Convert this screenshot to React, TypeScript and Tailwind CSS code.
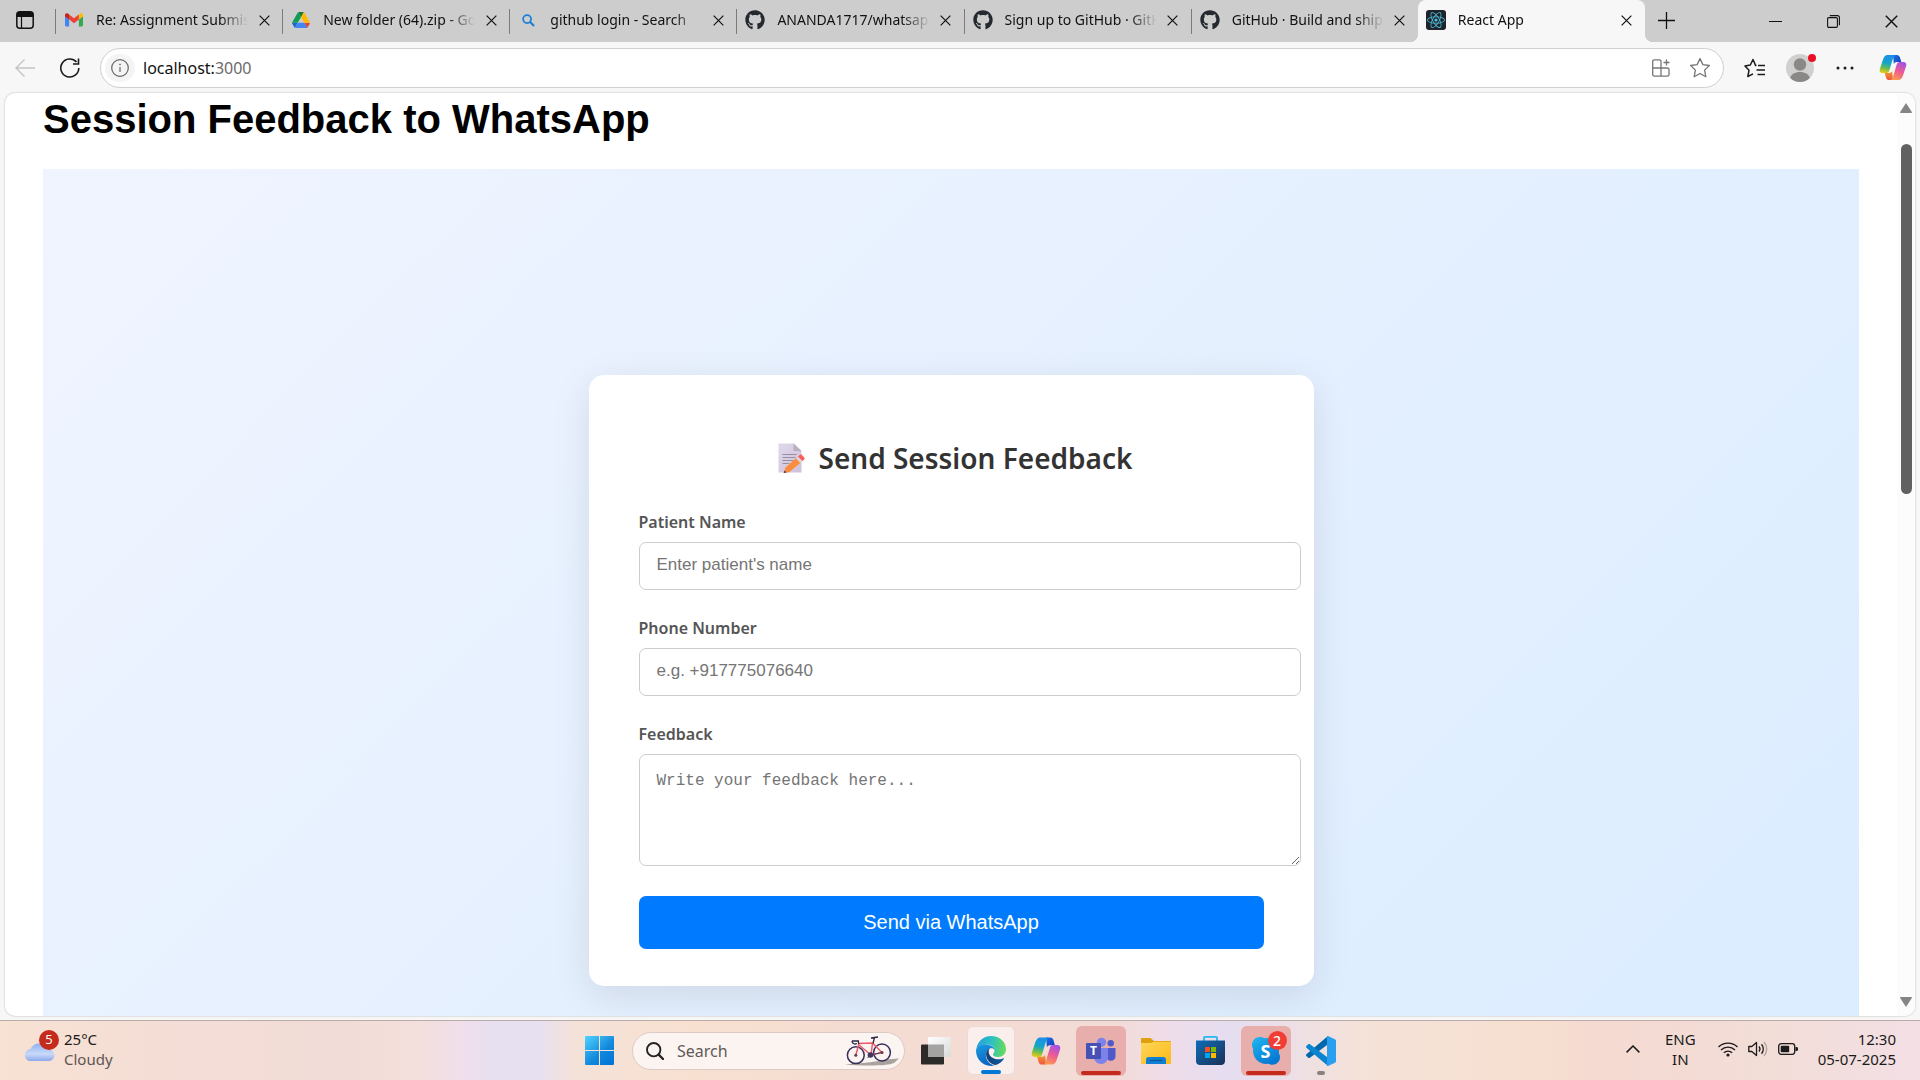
import React from "react";
import { FaGithub, FaReact } from "react-icons/fa";

type IconProps = { className?: string };

const Gmail = ({ className }: IconProps) => (
  <svg viewBox="0 0 24 18" className={className} aria-hidden="true">
    <path d="M0 3.500v12.600c0 .9.7 1.600 1.600 1.600h3.900V8.200z" fill="#4285f4" />
    <path d="M24 3.500v12.600c0 .9-.7 1.600-1.600 1.600h-3.900V8.200z" fill="#34a853" />
    <path d="M18.500 1.600v6.700L24 4.200V2.200C24 .2 21.600-.9 20 .4z" fill="#fbbc04" />
    <path d="M5.500 8.300V1.600L12 6.500l6.500-4.900v6.700L12 13.200z" fill="#ea4335" />
    <path d="M0 2.200v2l5.500 4.100V1.600L4 .4C2.400-.9 0 .2 0 2.200z" fill="#c5221f" />
  </svg>
);

const Drive = ({ className }: IconProps) => (
  <svg viewBox="0 0 87 78" className={className} aria-hidden="true">
    <path d="M6.600 66.850l3.850 6.650c.8 1.400 1.950 2.500 3.300 3.300L27.500 53H0c0 1.550.4 3.100 1.200 4.500z" fill="#1967d2" />
    <path d="M43.650 25L29.900 1.200c-1.350.8-2.500 1.900-3.300 3.300L1.200 48.500A9 9 0 0 0 0 53h27.500z" fill="#0f9d58" />
    <path d="M73.550 76.800c1.350-.8 2.500-1.900 3.300-3.300l8.600-15c.8-1.400 1.200-2.950 1.200-4.500H59.800l5.850 11.500z" fill="#ea4335" />
    <path d="M43.650 25L57.400 1.200C56.050.4 54.500 0 52.900 0H34.400c-1.600 0-3.150.45-4.500 1.200z" fill="#188038" />
    <path d="M59.800 53H27.500L13.750 76.800c1.350.8 2.900 1.200 4.500 1.200h50.800c1.600 0 3.150-.45 4.500-1.200z" fill="#4285f4" />
    <path d="M73.400 26.500L60.700 4.500c-.8-1.400-1.950-2.500-3.300-3.300L43.650 25 59.800 53h27.450c0-1.550-.4-3.100-1.200-4.500z" fill="#ffba00" />
  </svg>
);

const BlueSearch = ({ className }: IconProps) => (
  <svg viewBox="0 0 14 14" className={className} fill="none" stroke="#1a7fd6" aria-hidden="true">
    <circle cx="5.500" cy="5.500" r="4.300" strokeWidth="1.900" />
    <path d="M8.700 8.700L13 13" strokeWidth="2.300" />
  </svg>
);

const ReactFavicon = ({ className }: IconProps) => (
  <span className={`flex items-center justify-center rounded-[3px] bg-[#20232a] ${className ?? ""}`}>
    <FaReact className="h-[18px] w-[18px] text-[#4cc0e0]" />
  </span>
);

const Cross = ({ className }: IconProps) => (
  <svg viewBox="0 0 12 12" className={className} stroke="currentColor" strokeWidth="1.300" fill="none" aria-hidden="true">
    <path d="M.7.7l10.600 10.600M11.300.7L.7 11.300" />
  </svg>
);

const StarPath = "M12 2.600l2.850 6.050 6.550.85-4.800 4.600 1.200 6.600L12 17.500l-5.800 3.200 1.200-6.600-4.800-4.600 6.550-.85z";

const Copilot = ({ className, id }: IconProps & { id: string }) => (
  <svg viewBox="0 0 30 28" className={className} aria-hidden="true">
    <defs>
      <linearGradient id={`${id}a`} x1="0.500" y1="0" x2="0.300" y2="1">
        <stop offset="0" stopColor="#1a8fe8" />
        <stop offset=".45" stopColor="#15a5c8" />
        <stop offset=".7" stopColor="#5fba5c" />
        <stop offset="1" stopColor="#f0cb10" />
      </linearGradient>
      <linearGradient id={`${id}b`} x1="0.700" y1="0" x2="0.300" y2="1">
        <stop offset="0" stopColor="#a352e6" />
        <stop offset=".5" stopColor="#ee5a93" />
        <stop offset="1" stopColor="#fd9a4e" />
      </linearGradient>
      <linearGradient id={`${id}c`} x1="0" y1="0" x2="1" y2="1">
        <stop offset="0" stopColor="#1478e8" />
        <stop offset="1" stopColor="#1b36bb" />
      </linearGradient>
      <linearGradient id={`${id}d`} x1="0" y1="0" x2="0" y2="1">
        <stop offset="0" stopColor="#f3a02c" />
        <stop offset="1" stopColor="#ee5540" />
      </linearGradient>
    </defs>
    <path d="M15 .5h4.200c1.700 0 2.700 1 3.200 2.600l1.500 5.100H19c-1.500 0-2.600.8-3.100 2.300z" fill={`url(#${id}c)`} />
    <path d="M15 27.500h-4.200c-1.700 0-2.700-1-3.200-2.600l-1.500-5.100H11c1.500 0 2.600-.8 3.100-2.300z" fill={`url(#${id}d)`} />
    <path d="M17.800.5H9.200C6.700.5 5.200 2.600 4.300 5.300L.9 15.600c-.8 2.500.4 4.400 2.900 4.400h4c1.700 0 2.700-1 3.200-2.600L15 4.200C15.600 2.200 16.400.8 17.800.5z" fill={`url(#${id}a)`} />
    <path d="M12.200 27.500h8.600c2.500 0 4-2.100 4.900-4.800l3.400-10.300c.8-2.500-.4-4.400-2.900-4.400h-4c-1.700 0-2.700 1-3.200 2.600l-4 13.200c-.6 2-1.400 3.400-2.800 3.700z" fill={`url(#${id}b)`} />
  </svg>
);

const WindowsLogo = () => (
  <svg viewBox="0 0 29 29" className="h-[29px] w-[29px]" aria-hidden="true">
    <defs>
      <linearGradient id="win" gradientUnits="userSpaceOnUse" x1="0" y1="0" x2="26" y2="29">
        <stop offset="0" stopColor="#50d4ff" />
        <stop offset=".6" stopColor="#1288dc" />
        <stop offset="1" stopColor="#0274d6" />
      </linearGradient>
    </defs>
    <path fill="url(#win)" d="M1 0h13v14H0V1a1 1 0 0 1 1-1zM15 0h13a1 1 0 0 1 1 1v13H15zM0 15h14v14H1a1 1 0 0 1-1-1zM15 15h14v13a1 1 0 0 1-1 1H15z" />
  </svg>
);

const Bicycle = () => (
  <svg viewBox="0 0 54 30" className="h-[30px] w-[54px]" fill="none" aria-hidden="true">
    <path d="M0 28.500C12 27 28 27 40 23.500l14-1-5 4.500c-6 3-32 3-49 1.500z" fill="#aaa29f" />
    <circle cx="10.800" cy="19.200" r="8.400" stroke="#34315c" strokeWidth="1.500" />
    <circle cx="37" cy="16.500" r="8.400" stroke="#34315c" strokeWidth="1.500" />
    <path d="M10.800 19.200L14 7.500 27.500 7 37 16.500 26 19 14 9M27.500 7L26 19" stroke="#ee5b6c" strokeWidth="1.500" />
    <path d="M14 8l-1-3M7 5h7M7 5c0 3 3 3.500 5 2.500M28 7.500l1.500-6M26 2l7-1" stroke="#2c2948" strokeWidth="1.300" />
    <circle cx="25.500" cy="19" r="2.800" fill="#40375c" />
    <path d="M25.500 19l-3 3M25.500 19l11.500-2.500" stroke="#40375c" />
    <circle cx="10.800" cy="19.200" r="1.500" fill="#5a4050" />
    <circle cx="37" cy="16.500" r="1.500" fill="#5a4050" />
  </svg>
);

const TaskView = () => (
  <svg viewBox="0 0 30 28" className="h-7 w-[30px]" aria-hidden="true">
    <defs>
      <linearGradient id="tv" x1="0" y1="0" x2="1" y2="1">
        <stop offset="0" stopColor="#fff" />
        <stop offset="1" stopColor="#d9d9d9" />
      </linearGradient>
    </defs>
    <rect y="7.500" width="23" height="20" rx="1" fill="#2c2b2a" />
    <rect x="7" width="23" height="20" rx="1" fill="url(#tv)" />
    <path d="M7 7.500h16v12.500H7z" fill="#a4a3a2" />
  </svg>
);

const Edge = () => (
  <svg viewBox="0 0 30 30" className="h-[30px] w-[30px]" aria-hidden="true">
    <defs>
      <linearGradient id="eg" x1="0" y1=".4" x2="1" y2=".5">
        <stop offset="0" stopColor="#279fdc" />
        <stop offset=".5" stopColor="#2cc1c2" />
        <stop offset="1" stopColor="#68dc55" />
      </linearGradient>
      <linearGradient id="eb" x1="0" y1="0" x2=".4" y2="1">
        <stop offset="0" stopColor="#1b9de3" />
        <stop offset="1" stopColor="#0a66c2" />
      </linearGradient>
      <linearGradient id="ed" x1="0" y1="0" x2="1" y2="0">
        <stop offset="0" stopColor="#123f75" />
        <stop offset="1" stopColor="#0c59a4" />
      </linearGradient>
    </defs>
    <path d="M.3 13.500C1.200 5.600 7.200 0 15 0c8.800 0 15 6 15 13 0 5-3.600 8-8 8-3.400 0-5-1.400-5-2.600 0-1 1.500-1.500 1.500-3.800C18.500 11 14.500 8.300 10 8.300 5 8.300 1.500 10.500.3 13.500z" fill="url(#eg)" />
    <path d="M0 15c0-4 4.200-6.700 9-6.700 4.800 0 9 2.500 9.500 5.500-1-1.600-3-2-4.500-1.300-3 1.400-4.600 4.600-4 8 .7 4.500 4 8 8.500 9A15 15 0 0 1 0 15z" fill="url(#eb)" />
    <path d="M13.500 12.700c-2.400 1-3.700 3.500-3.400 6.300.5 5 4.500 9.700 9.900 10.100 3-1 6-3.200 7.800-6 .3-.6-.2-1-.8-.7C20 25 13 21.500 12.700 16c0-1.400.3-2.400.8-3.300z" fill="url(#ed)" />
  </svg>
);

const Teams = () => (
  <svg viewBox="0 0 30 28" className="h-7 w-[30px]" aria-hidden="true">
    <circle cx="24.700" cy="6.300" r="3.200" fill="#5059c9" />
    <circle cx="15.500" cy="5.300" r="4.600" fill="#7b83eb" />
    <path d="M20 11h9.500v8.500c0 2.500-2 4.300-4.500 4.300S20 22 20 19.500z" fill="#5059c9" />
    <path d="M8 11h14v9c0 4-3 7-7 7s-7-3-7-7z" fill="#7b83eb" />
    <rect y="6" width="15" height="16" rx="1" fill="#4650b5" />
    <text x="7.500" y="18.300" textAnchor="middle" fontFamily="Noto Sans, sans-serif" fontWeight="700" fontSize="12" fill="#fff">T</text>
  </svg>
);

const Explorer = () => (
  <svg viewBox="0 0 30 26" className="h-[26px] w-[30px]" aria-hidden="true">
    <defs>
      <linearGradient id="fx" x1="0" y1="0" x2="1" y2="1">
        <stop offset="0" stopColor="#ffd65a" />
        <stop offset="1" stopColor="#fbb916" />
      </linearGradient>
    </defs>
    <path d="M0 1a1 1 0 0 1 1-1h8.500l3.500 3h16a1 1 0 0 1 1 1v5H0z" fill="#dea00d" />
    <path d="M0 5h9.500L13 3.800h17V25a1 1 0 0 1-1 1H1a1 1 0 0 1-1-1z" fill="url(#fx)" />
    <path d="M5 26v-4.500c0-1.500 1-2.500 2.500-2.500h15c1.500 0 2.500 1 2.500 2.500V26z" fill="#1180d2" />
    <path d="M8.500 22.500h13" stroke="#0a5797" strokeWidth="1.200" />
  </svg>
);

const Store = () => (
  <svg viewBox="0 0 29 29" className="h-[29px] w-[29px]" aria-hidden="true">
    <defs>
      <linearGradient id="st" x1="0" y1="0" x2="1" y2="1">
        <stop offset="0" stopColor="#0f6cb8" />
        <stop offset="1" stopColor="#1b3157" />
      </linearGradient>
    </defs>
    <path d="M8 6V1.800C8 1.200 8.300.9 9 .9h11c.7 0 1 .3 1 .9V6" fill="none" stroke="#27b8ee" strokeWidth="1.800" />
    <path d="M0 4.500h29V25c0 2.400-1.600 4-4 4H4c-2.400 0-4-1.600-4-4z" fill="url(#st)" />
    <path d="M9 11h5v5H9z" fill="#f25022" />
    <path d="M15 11h5v5h-5z" fill="#7fba00" />
    <path d="M9 17h5v5H9z" fill="#00a4ef" />
    <path d="M15 17h5v5h-5z" fill="#ffb900" />
  </svg>
);

const Skype = () => (
  <svg viewBox="0 0 28 28" className="h-7 w-7" aria-hidden="true">
    <defs>
      <linearGradient id="sk" x1="0" y1="0" x2=".6" y2="1">
        <stop offset="0" stopColor="#22b8f0" />
        <stop offset="1" stopColor="#0578d4" />
      </linearGradient>
    </defs>
    <path d="M8 0c2 0 3 .6 4 1.200C20 .2 27 6 27 14c0 1 0 1.500-.2 2.300.7 1 1.200 2.300 1.200 4 0 4.200-3.400 7.500-7.500 7.500-1.500 0-2.700-.4-3.800-1C8 28 1 21.800 1 14c0-.8 0-1.400.2-2C.4 10.700 0 9.500 0 8c0-4.500 3.500-8 8-8z" fill="url(#sk)" />
    <text x="13.500" y="20.500" textAnchor="middle" fontFamily="Noto Sans, sans-serif" fontWeight="700" fontSize="18" fill="#fff">S</text>
  </svg>
);

const VSCode = () => (
  <svg viewBox="0 0 30 30" className="h-[30px] w-[30px]" aria-hidden="true">
    <path d="M22 0v8.200L3.600 22 2.500 22 .4 20c-.5-.5-.5-1.200 0-1.700z" fill="#0069ad" />
    <path d="M22 30v-8.200L3.600 8h-1.100L.4 10c-.5.500-.5 1.200 0 1.700z" fill="#0a84cf" />
    <path d="M22 0l7 3.300c.6.300 1 .9 1 1.600v20.200c0 .7-.4 1.300-1 1.600L22 30c-.6 0-1-.4-1-1V1c0-.6.400-1 1-1z" fill="#2a9ff0" />
  </svg>
);

const Memo = () => (
  <svg viewBox="0 0 27 30" className="h-[30px] w-[27px]" aria-hidden="true">
    <defs>
      <linearGradient id="pg" x1="0" y1="0" x2="1" y2="1">
        <stop offset="0" stopColor="#e0d9ea" />
        <stop offset="1" stopColor="#cfc0da" />
      </linearGradient>
    </defs>
    <path d="M.5.5H16L23.500 8v21.500H.5z" fill="url(#pg)" />
    <path d="M15.500.5l8 7.500h-8z" fill="#b9b0bd" />
    <path d="M4.500 11.500h14M4.500 14.500h13M4.500 17.500h11M4.500 20.500h7" stroke="#978f9f" strokeWidth="1" />
    <path d="M6 30l1.500-5.500L19.500 14l4.500 4.500L11 29.300z" fill="#fb8c3c" />
    <path d="M18 15.500l2-2 4.500 4.500-2.200 2z" fill="#dcd5e6" />
    <path d="M20 13.500l1.700-1.600c.7-.6 1.500-.6 2.100 0l2.400 2.500c.6.600.6 1.400 0 2L24.500 18z" fill="#fb5d55" />
    <path d="M5.500 30l1.200-2.500 1.700 2z" fill="#4a2c5a" />
  </svg>
);

const tabs = [
  { title: "Re: Assignment Submission", icon: <Gmail className="h-[14px] w-[18px]" /> },
  { title: "New folder (64).zip - Google Drive", icon: <Drive className="h-4 w-[18px]" /> },
  { title: "github login - Search", icon: <BlueSearch className="h-[13px] w-[13px]" /> },
  { title: "ANANDA1717/whatsapp-feedback", icon: <FaGithub className="h-5 w-5 text-[#24292f]" /> },
  { title: "Sign up to GitHub · GitHub", icon: <FaGithub className="h-5 w-5 text-[#24292f]" /> },
  { title: "GitHub · Build and ship software", icon: <FaGithub className="h-5 w-5 text-[#24292f]" /> },
  { title: "React App", icon: <ReactFavicon className="h-5 w-5" />, active: true },
];

function TabStrip() {
  return (
    <header className="flex h-[42px] shrink-0 bg-[#cdcdcd]">
      <button aria-label="Tab actions" className="flex w-[55px] shrink-0 items-center pb-0.5 pl-4">
        <svg viewBox="0 0 18 18" className="h-[18px] w-[18px]" aria-hidden="true">
          <rect x=".8" y=".8" width="16.400" height="16.400" rx="3" fill="none" stroke="#111" strokeWidth="1.500" />
          <path d="M1 6V3.500C1 2 2 1 3.500 1h11C16 1 17 2 17 3.500V6z" fill="#111" />
          <path d="M5.500 6v11" stroke="#111" strokeWidth="1.200" />
        </svg>
      </button>
      <div role="tablist" className="grid min-w-0 max-w-[1590px] flex-1 grid-cols-7">
        {tabs.map((tab) => (
          <div
            key={tab.title}
            className={
              tab.active
                ? "relative flex min-w-0 items-center rounded-t-lg bg-[#f7f7f7] pr-2 pb-0.5 pl-2"
                : "flex min-w-0 items-center pr-2 pb-0.5"
            }
          >
            {tab.active ? (
              <>
                <span className="absolute bottom-0 -left-2 h-2 w-2 bg-[radial-gradient(circle_at_0_0,#cdcdcd_8px,#f7f7f7_8px)]" />
                <span className="absolute -right-2 bottom-0 h-2 w-2 bg-[radial-gradient(circle_at_100%_0,#cdcdcd_8px,#f7f7f7_8px)]" />
              </>
            ) : (
              <span className="mt-0.5 mr-2 h-[25px] w-px shrink-0 bg-[#7b7b7b]" />
            )}
            <button role="tab" aria-selected={!!tab.active} className="flex min-w-0 flex-1 items-center gap-3 text-left">
              <span className="flex w-5 shrink-0 justify-center">{tab.icon}</span>
              <span className="min-w-0 flex-1 overflow-hidden text-[14px] leading-5 whitespace-nowrap text-[#111] [mask-image:linear-gradient(to_right,#000_calc(100%-28px),transparent)]">
                {tab.title}
              </span>
            </button>
            <button aria-label={`Close ${tab.title}`} className="ml-1.5 flex h-5 w-5 shrink-0 items-center justify-center text-[#111]">
              <Cross className="h-[11px] w-[11px]" />
            </button>
          </div>
        ))}
      </div>
      <button aria-label="New tab" className="flex w-[42px] items-center justify-center pb-0.5">
        <svg viewBox="0 0 17 17" className="h-[17px] w-[17px]" stroke="#111" strokeWidth="1.300" aria-hidden="true">
          <path d="M8.500 0v17M0 8.500h17" />
        </svg>
      </button>
      <div className="ml-auto flex">
        <button aria-label="Minimize" className="flex w-[58px] items-center justify-center">
          <svg viewBox="0 0 13 13" className="h-[13px] w-[13px]" stroke="#111" aria-hidden="true">
            <path d="M0 6.500h13" />
          </svg>
        </button>
        <button aria-label="Restore" className="flex w-[58px] items-center justify-center">
          <svg viewBox="0 0 13 13" className="h-[13px] w-[13px]" fill="none" stroke="#111" strokeWidth="1.100" aria-hidden="true">
            <rect x=".6" y="2.600" width="9.800" height="9.800" rx="1.200" />
            <path d="M2.800.6h7.600c1.200 0 2 .8 2 2v7.600" />
          </svg>
        </button>
        <button aria-label="Close window" className="flex w-[58px] items-center justify-center text-[#111]">
          <Cross className="h-[13px] w-[13px]" />
        </button>
      </div>
    </header>
  );
}

function Toolbar() {
  return (
    <div className="flex h-[51px] shrink-0 items-center bg-[#f7f7f7] pr-[13px] pl-[15px]">
      <button aria-label="Back" className="mr-[25px] text-[#c4c4c4]">
        <svg viewBox="0 0 20 18" className="h-[18px] w-5" fill="none" stroke="currentColor" strokeWidth="1.400" aria-hidden="true">
          <path d="M20 9H1M9.500.5L1 9l8.500 8.500" />
        </svg>
      </button>
      <button aria-label="Refresh" className="mr-5 text-[#1b1b1b]">
        <svg viewBox="0 0 20 20" className="h-5 w-5" fill="none" stroke="currentColor" strokeWidth="1.600" aria-hidden="true">
          <path d="M18.800 10A9 9 0 1 1 16.500 4M18.500.5V6H13" />
        </svg>
      </button>
      <div className="flex h-10 flex-1 items-center rounded-full border border-[#cfcfcf] bg-white pr-[13px] pl-1">
        <button aria-label="View site information" className="flex h-7 w-[30px] items-center justify-center rounded-full bg-[#f4f4f4]">
          <svg viewBox="0 0 18 18" className="h-[18px] w-[18px]" fill="none" stroke="#666" strokeWidth="1.200" aria-hidden="true">
            <circle cx="9" cy="9" r="8.300" />
            <path d="M9 8v5" />
            <path d="M9 4.700v1.500" strokeWidth="1.500" />
          </svg>
        </button>
        <a href="http://localhost:3000" className="ml-2 flex-1 text-[16px] leading-6 text-[#111]">
          localhost:<span className="text-[#6b6b6b]">3000</span>
        </a>
        <button aria-label="Apps" className="mr-5">
          <svg viewBox="0 0 18 18" className="h-[18px] w-[18px]" fill="none" stroke="#767676" strokeWidth="1.300" aria-hidden="true">
            <path d="M9 9V2.500c0-1-.6-1.700-1.700-1.700h-5C1.300.8.700 1.500.7 2.500v13c0 1 .6 1.700 1.600 1.700h13c1 0 1.700-.7 1.700-1.700v-5c0-1-.6-1.500-1.700-1.500H.7M9 9v8.200M14.500.5v6M11.500 3.500h6" />
          </svg>
        </button>
        <button aria-label="Add to favorites">
          <svg viewBox="2 2 20 20" className="h-5 w-5" fill="none" stroke="#767676" strokeWidth="1.300" strokeLinejoin="round" aria-hidden="true">
            <path d={StarPath} />
          </svg>
        </button>
      </div>
      <button aria-label="Favorites" className="ml-5">
        <svg viewBox="0 0 22 20" className="h-5 w-[22px]" fill="none" stroke="#1b1b1b" strokeWidth="1.500" strokeLinejoin="round" aria-hidden="true">
          <path d="M12.500 7.600L11.500 7.400 9 1.500 6.300 7 1 8l4 4.300L3.800 18.500 9 15.800M14 7.500h7M12.500 12H21M13.500 16.500H21" />
        </svg>
      </button>
      <button aria-label="Profile" className="relative ml-5">
        <svg viewBox="0 0 28 28" className="h-7 w-7" aria-hidden="true">
          <circle cx="14" cy="14" r="14" fill="#d2d0ce" />
          <circle cx="14" cy="10.500" r="6.200" fill="#8a8886" />
          <path d="M4.200 24C5 20.200 9 18 14 18s9 2.200 9.800 6a14 14 0 0 1-19.600 0z" fill="#8a8886" />
        </svg>
        <span className="absolute top-0 -right-0.5 h-2 w-2 rounded-full bg-[#e81123]" />
      </button>
      <button aria-label="Settings and more" className="ml-[22px]">
        <svg viewBox="0 0 18 4" className="h-1 w-[18px]" fill="#1b1b1b" aria-hidden="true">
          <circle cx="2" cy="2" r="1.500" />
          <circle cx="9" cy="2" r="1.500" />
          <circle cx="16" cy="2" r="1.500" />
        </svg>
      </button>
      <button aria-label="Copilot" className="ml-[25px]">
        <Copilot id="cpt" className="h-[27px] w-7" />
      </button>
    </div>
  );
}

const fieldClass =
  "block w-[calc(100%+37px)] rounded-[7px] border border-[#ccc] bg-white px-[17px] text-[#333] outline-none placeholder:text-[#757575] placeholder:opacity-100";
const labelClass = "mb-2 block text-[16px] leading-6 font-semibold text-[#555]";

function FeedbackForm() {
  return (
    <form
      onSubmit={(e) => e.preventDefault()}
      className="w-full max-w-[725px] rounded-[15px] bg-white px-[50px] pt-[63px] pb-[37px] shadow-[0_10px_38px_rgba(0,0,0,0.1)]"
    >
      <h2 className="mb-8 flex items-center justify-center gap-[14px] pl-2 text-[28px] leading-10 font-semibold text-[#333]">
        <Memo />
        Send Session Feedback
      </h2>
      <div className="mb-[26px]">
        <label htmlFor="name" className={labelClass}>Patient Name</label>
        <input id="name" placeholder="Enter patient's name" className={`${fieldClass} h-12 pb-0.5 font-['Liberation_Sans',Arial,sans-serif] text-[17px]`} />
      </div>
      <div className="mb-[26px]">
        <label htmlFor="phone" className={labelClass}>Phone Number</label>
        <input id="phone" placeholder="e.g. +917775076640" className={`${fieldClass} h-12 pb-0.5 font-['Liberation_Sans',Arial,sans-serif] text-[17px]`} />
      </div>
      <div className="mb-[30px]">
        <label htmlFor="feedback" className={labelClass}>Feedback</label>
        <textarea id="feedback" placeholder="Write your feedback here..." className={`${fieldClass} h-28 resize-y pt-4 font-['Liberation_Mono',monospace] text-[16px] leading-[21px]`} />
      </div>
      <button type="submit" className="block h-[53px] w-full rounded-[7px] bg-[#007bff] pb-0.5 font-['Liberation_Sans',Arial,sans-serif] text-[20px] text-white">
        Send via WhatsApp
      </button>
    </form>
  );
}

function Viewport() {
  return (
    <div className="min-h-0 flex-1 bg-[#f7f7f7] px-[5px] pb-1">
      <div className="flex h-full overflow-hidden rounded-[10px] bg-white shadow-[0_0_2px_rgba(0,0,0,0.3)]">
        <main className="h-full min-w-0 flex-1 overflow-hidden px-[38px] pt-[3px]">
          <h1 className="mb-[27px] font-['Liberation_Sans',Arial,sans-serif] text-[40px] leading-[46px] font-bold text-black">
            Session Feedback to WhatsApp
          </h1>
          <div className="flex h-[1023px] items-center justify-center bg-[linear-gradient(135deg,#f0f4ff,#d9ecff)]">
            <FeedbackForm />
          </div>
        </main>
        <div className="flex w-[18px] shrink-0 flex-col items-center bg-[#fcfcfc] pt-[10px] pb-[9px]">
          <svg viewBox="0 0 12 10" className="h-[10px] w-3" fill="#858585" aria-hidden="true">
            <path d="M6 0l6 9.200a1 1 0 0 1-.6.800H.6a1 1 0 0 1-.6-.8z" />
          </svg>
          <div className="flex w-full flex-1 flex-col items-center pt-[31px]">
            <div className="h-[41%] w-[11px] rounded-full bg-[#616161]" />
          </div>
          <svg viewBox="0 0 12 10" className="h-[10px] w-3" fill="#858585" aria-hidden="true">
            <path d="M6 10l6-9.200a1 1 0 0 0-.6-.8H.6a1 1 0 0 0-.6.800z" />
          </svg>
        </div>
      </div>
    </div>
  );
}

const slot = "flex h-[50px] w-[55px] shrink-0 items-center justify-center";

function Taskbar() {
  return (
    <footer className="grid h-[60px] shrink-0 grid-cols-[1fr_auto_1fr] border-t border-[#b9aba7] bg-[linear-gradient(90deg,#f8e2d3_0%,#f4ddd5_8%,#f2dcd7_18%,#f3dfdc_22%,#f0deeb_24%,#e6e0f1_26%,#e6e0f1_28%,#f5e2d8_30%,#f7e0d0_36%,#f5dcd2_44%,#f3dcd6_58%,#eedcea_61%,#e5def0_64%,#ecdfe6_67%,#f5e2d8_71%,#f6dfd0_80%,#f5dad1_83%,#f2ddd7_92%,#f3dfe5_100%)]">
      <button className="flex items-center pb-1 text-left">
        <span className="relative ml-[25px] h-[30px] w-[30px]">
          <svg viewBox="0 0 30 19" className="mt-2 h-[19px] w-[30px]" aria-hidden="true">
            <defs>
              <linearGradient id="cl" x1="0" y1="0" x2="0" y2="1">
                <stop offset="0" stopColor="#8fb0f0" />
                <stop offset=".6" stopColor="#c9dafa" />
                <stop offset="1" stopColor="#8ca8ea" />
              </linearGradient>
            </defs>
            <path d="M6 19a6 6 0 0 1-.5-12A9.500 9.500 0 0 1 23 7.500a5.800 5.800 0 0 1 1.500 11.500z" fill="url(#cl)" />
          </svg>
          <span className="absolute -top-1 left-[14px] flex h-5 w-5 items-center justify-center rounded-full bg-[#c42b1c] text-[13px] text-white">5</span>
        </span>
        <span className="ml-[9px] flex flex-col text-[15px] leading-5">
          <span className="text-[#1b1b1b]">25°C</span>
          <span className="text-[#5d5653]">Cloudy</span>
        </span>
      </button>
      <nav aria-label="Taskbar" className="flex items-center">
        <button aria-label="Start" className={slot}><WindowsLogo /></button>
        <label className="mr-[3px] ml-[5px] flex h-[38px] w-[273px] items-center rounded-full border border-[#dccbc5] bg-[#fcf4f1] pr-[5px] pl-[13px]">
          <svg viewBox="0 0 18 18" className="h-[18px] w-[18px] shrink-0" fill="none" stroke="#252525" strokeWidth="1.900" strokeLinecap="round" aria-hidden="true">
            <circle cx="7.700" cy="7.700" r="6.700" />
            <path d="M12.700 12.700l4.300 4.300" strokeWidth="2.400" />
          </svg>
          <input type="search" aria-label="Search" placeholder="Search" className="ml-[13px] min-w-0 flex-1 bg-transparent text-[16px] outline-none placeholder:text-[#5f5a58] placeholder:opacity-100" />
          <Bicycle />
        </label>
        <button aria-label="Task view" className={slot}><TaskView /></button>
        <button aria-label="Microsoft Edge" className={slot}>
          <span className="relative flex h-[49px] w-12 items-center justify-center rounded-md border border-[#eadbd6] bg-[#faefec]">
            <Edge />
            <span className="absolute bottom-0 h-1 w-5 rounded-full bg-[#0078d4]" />
          </span>
        </button>
        <button aria-label="Copilot" className={slot}><Copilot id="cpb" className="h-7 w-[30px]" /></button>
        <button aria-label="Teams" className={slot}>
          <span className="relative flex h-[50px] w-[50px] items-center justify-center rounded-md bg-[#e8aeab]">
            <Teams />
            <span className="absolute bottom-px h-1 w-10 rounded-full bg-[#c42b1c]" />
          </span>
        </button>
        <button aria-label="File Explorer" className={slot}><Explorer /></button>
        <button aria-label="Microsoft Store" className={slot}><Store /></button>
        <button aria-label="Skype" className={slot}>
          <span className="relative flex h-[50px] w-[50px] items-center justify-center rounded-md bg-[#e8aeab]">
            <Skype />
            <span className="absolute top-[5px] right-1 flex h-[19px] w-[19px] items-center justify-center rounded-full bg-[#f03e35] text-[14px] font-medium text-white">2</span>
            <span className="absolute bottom-px h-1 w-10 rounded-full bg-[#c42b1c]" />
          </span>
        </button>
        <button aria-label="Visual Studio Code" className={`${slot} relative`}>
          <VSCode />
          <span className="absolute bottom-px h-1 w-2 rounded-full bg-[#8a817e]" />
        </button>
      </nav>
      <div className="flex items-center justify-end pr-6 pb-[3px] text-[15px] leading-5 text-[#1b1b1b]">
        <button aria-label="Show hidden icons">
          <svg viewBox="0 0 14 8" className="h-2 w-[14px]" fill="none" stroke="currentColor" strokeWidth="1.500" aria-hidden="true">
            <path d="M.6 7.400L7 1l6.400 6.400" />
          </svg>
        </button>
        <button className="ml-[25px] flex flex-col text-center"><span>ENG</span><span>IN</span></button>
        <button aria-label="Network, volume and battery" className="ml-[22px] flex items-center gap-[10px]">
          <svg viewBox="0 0 20 16" className="h-4 w-5" fill="none" stroke="currentColor" strokeWidth="1.300" aria-hidden="true">
            <path d="M.5 6a13.500 13.500 0 0 1 19 0M3 9a10 10 0 0 1 14 0M5.800 11.800a6 6 0 0 1 8.400 0" />
            <circle cx="10" cy="14" r="1.600" fill="currentColor" stroke="none" />
          </svg>
          <svg viewBox="0 0 20 16" className="h-4 w-5" fill="none" stroke="currentColor" strokeWidth="1.300" strokeLinejoin="round" aria-hidden="true">
            <path d="M.8 5.500h3L8.500 1.500v13L3.800 10.500h-3zM11 5.500a4 4 0 0 1 0 5M13.500 3.300a7 7 0 0 1 0 9.400" />
            <path d="M16 1a10.500 10.500 0 0 1 0 14" opacity=".3" />
          </svg>
          <svg viewBox="0 0 20 12" className="h-3 w-5" aria-hidden="true">
            <rect x=".7" y=".7" width="16" height="10.600" rx="2.500" fill="none" stroke="currentColor" strokeWidth="1.300" />
            <rect x="2.700" y="2.700" width="8.500" height="6.600" rx="1" fill="currentColor" />
            <path d="M17.500 4h1c1 0 1.500.6 1.500 2s-.5 2-1.500 2h-1z" fill="currentColor" />
          </svg>
        </button>
        <button className="ml-5 flex flex-col text-right"><span>12:30</span><span>05-07-2025</span></button>
      </div>
    </footer>
  );
}

export default function App() {
  return (
    <div className="flex h-screen w-full flex-col overflow-hidden bg-[#f7f7f7] font-['Noto_Sans',sans-serif]">
      <TabStrip />
      <Toolbar />
      <Viewport />
      <Taskbar />
    </div>
  );
}
